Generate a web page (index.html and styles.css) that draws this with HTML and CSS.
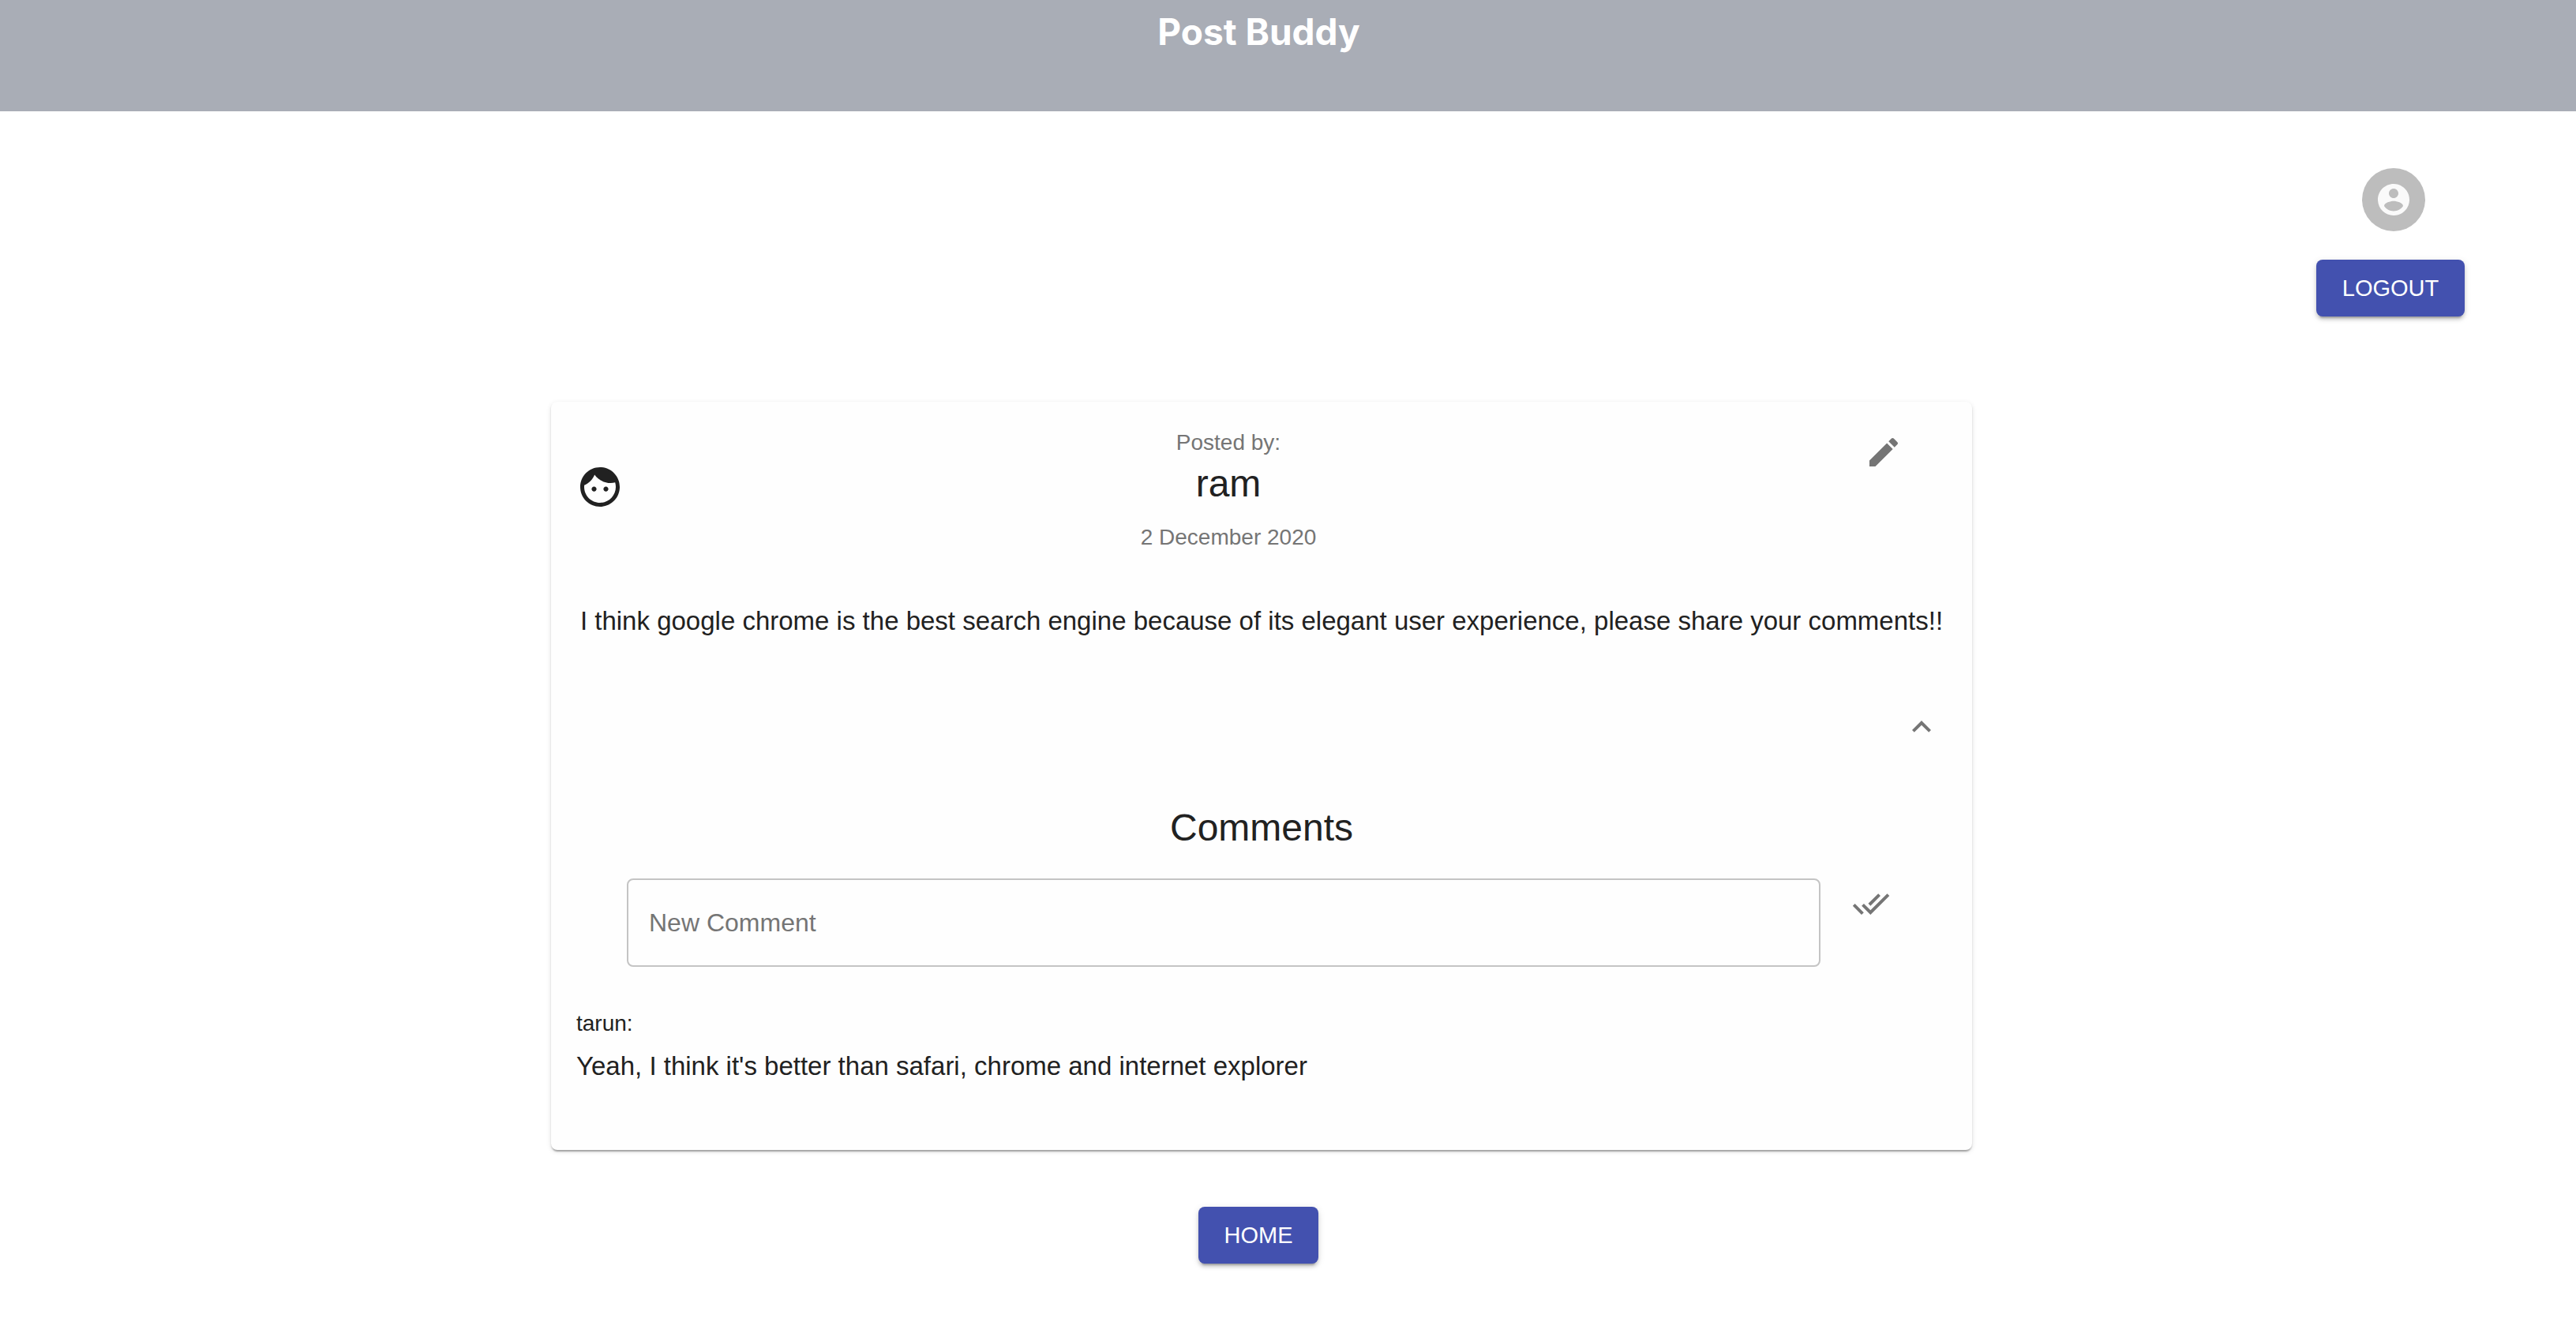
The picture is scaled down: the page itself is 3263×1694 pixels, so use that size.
FILE: index.html
```html
<!DOCTYPE html>
<html lang="en">
<head>
  <meta charset="utf-8">
  <title>Post Buddy</title>
  <link rel="stylesheet" href="styles.css">
</head>
<body>
  <header class="banner">
    <h1 class="banner-title">Post Buddy</h1>
  </header>

  <main class="page">
    <div class="account">
      <span class="avatar">
        <svg class="icon" viewBox="0 0 24 24" aria-hidden="true"><path d="M12 2C6.48 2 2 6.48 2 12s4.48 10 10 10 10-4.48 10-10S17.52 2 12 2zm0 3c1.66 0 3 1.34 3 3s-1.34 3-3 3-3-1.34-3-3 1.34-3 3-3zm0 14.2c-2.5 0-4.71-1.28-6-3.22.03-1.99 4-3.08 6-3.08 1.99 0 5.97 1.09 6 3.08-1.29 1.94-3.5 3.22-6 3.22z"/></svg>
      </span>
      <button class="button button-logout" type="button">LOGOUT</button>
    </div>

    <article class="card">
      <header class="card-header">
        <svg class="face" viewBox="0 0 24 24" aria-hidden="true"><path d="M9 11.75c-.69 0-1.25.56-1.25 1.25s.56 1.25 1.25 1.25 1.25-.56 1.25-1.25-.56-1.25-1.25-1.25zm6 0c-.69 0-1.25.56-1.25 1.25s.56 1.25 1.25 1.25 1.25-.56 1.25-1.25-.56-1.25-1.25-1.25zM12 2C6.48 2 2 6.48 2 12s4.48 10 10 10 10-4.48 10-10S17.52 2 12 2zm0 18c-4.41 0-8-3.59-8-8 0-.29.02-.58.05-.86 2.36-1.05 4.23-2.98 5.21-5.37C11.07 8.33 14.05 10 17.42 10c.78 0 1.53-.09 2.25-.26.21.71.33 1.47.33 2.26 0 4.41-3.59 8-8 8z"/></svg>
        <div class="byline">
          <p class="meta">Posted by:</p>
          <h2 class="heading">ram</h2>
          <p class="meta meta-date">2 December 2020</p>
        </div>
        <button class="icon-button" type="button" aria-label="Edit post">
          <svg class="icon" viewBox="0 0 24 24" aria-hidden="true"><path d="M3 17.25V21h3.75L17.81 9.94l-3.75-3.75L3 17.25zM20.71 7.04c.39-.39.39-1.02 0-1.41l-2.34-2.34c-.39-.39-1.02-.39-1.41 0l-1.83 1.83 3.75 3.75 1.83-1.83z"/></svg>
        </button>
      </header>

      <p class="post-text">I think google chrome is the best search engine because of its elegant user experience, please share your comments!!</p>

      <div class="card-actions">
        <button class="icon-button" type="button" aria-label="Hide comments" aria-expanded="true">
          <svg class="icon" viewBox="0 0 24 24" aria-hidden="true"><path d="M12 8l-6 6 1.41 1.41L12 10.83l4.59 4.58L18 14z"/></svg>
        </button>
      </div>

      <section class="comments">
        <h2 class="heading">Comments</h2>
        <form class="comment-form">
          <input class="comment-input" type="text" placeholder="New Comment" aria-label="New Comment">
          <button class="icon-button" type="button" aria-label="Send comment">
            <svg class="icon" viewBox="0 0 24 24" aria-hidden="true"><path d="M18 7l-1.41-1.41-6.34 6.34 1.41 1.41L18 7zm4.24-1.41L11.66 16.17 7.48 12l-1.41 1.41L11.66 19l12-12-1.42-1.41zM.41 13.41L6 19l1.41-1.41L1.83 12 .41 13.41z"/></svg>
          </button>
        </form>
        <div class="comment">
          <p class="comment-author">tarun:</p>
          <p class="comment-text">Yeah, I think it's better than safari, chrome and internet explorer</p>
        </div>
      </section>
    </article>

    <nav class="footer-nav">
      <button class="button button-home" type="button">HOME</button>
    </nav>
  </main>
</body>
</html>
```
FILE: styles.css
```css
*,
*::before,
*::after {
  box-sizing: border-box;
}

body {
  margin: 0;
  background: #fff;
  color: #212121;
  font: 32px/48px "Liberation Sans", Arial, sans-serif;
}

h1,
h2,
p {
  margin: 0;
  font-weight: 400;
}

svg {
  display: block;
  fill: currentColor;
}

.banner {
  min-height: 141px;
  padding: 8px 74px 0 0;
  background: #a9adb6;
  color: #fff;
  text-align: center;
}

.banner-title {
  font: 700 46px/64px Inter, sans-serif;
}

.page {
  display: flex;
  flex-direction: column;
  align-items: center;
  padding: 72px 67px 72px 0;
}

.account {
  display: flex;
  flex-direction: column;
  align-self: flex-end;
  align-items: center;
  gap: 36px;
  margin-right: 74px;
}

.avatar {
  display: grid;
  place-items: center;
  width: 80px;
  height: 80px;
  margin-left: 8px;
  border-radius: 50%;
  background: #bdbdbd;
  color: #fafafa;
}

.icon {
  width: 48px;
  height: 48px;
}

.button {
  height: 72px;
  padding: 0;
  border: 0;
  border-radius: 8px;
  background: #4351af;
  box-shadow: 0 6px 2px -4px rgba(0, 0, 0, 0.2), 0 4px 4px rgba(0, 0, 0, 0.14), 0 2px 10px rgba(0, 0, 0, 0.12);
  color: #fff;
  font: 29px/48px "Liberation Sans", Arial, sans-serif;
  cursor: pointer;
}

.button-logout {
  width: 188px;
}

.button-home {
  width: 152px;
}

.card {
  width: 100%;
  max-width: 1800px;
  margin-top: 108px;
  border-radius: 8px;
  background: #fefefe;
  box-shadow: 0 4px 2px -2px rgba(0, 0, 0, 0.2), 0 2px 2px rgba(0, 0, 0, 0.14), 0 2px 6px rgba(0, 0, 0, 0.12);
}

.card-header {
  display: flex;
  align-items: flex-start;
  padding: 32px 32px 30px;
}

.face {
  width: 60px;
  height: 60px;
  margin: 46px 32px 0 0;
}

.byline {
  flex: 1;
  text-align: center;
}

.meta {
  color: #757575;
  font-size: 28px;
  line-height: 40px;
}

.meta-date {
  margin-top: 16px;
}

.heading {
  font-size: 48px;
  line-height: 64px;
}

.icon-button {
  flex: none;
  padding: 24px;
  border: 0;
  border-radius: 50%;
  background: none;
  color: #757575;
  cursor: pointer;
}

.card-header .icon-button {
  margin: -16px 32px 0 48px;
}

.post-text,
.comment-text {
  font-size: 33px;
}

.post-text {
  padding: 32px;
  text-align: center;
}

.card-actions {
  display: flex;
  justify-content: flex-end;
  padding: 30px 16px 16px;
}

.comments {
  padding: 32px 32px 82px;
  text-align: center;
}

.comment-form {
  display: flex;
  align-items: flex-start;
  gap: 16px;
  margin-top: 32px;
  padding: 0 48px 0 64px;
}

.comment-form .icon-button {
  margin-top: -16px;
}

.comment-input {
  flex: 1;
  min-width: 0;
  height: 112px;
  padding: 0 26px;
  border: 2px solid #c4c4c4;
  border-radius: 8px;
  background: none;
  color: inherit;
  font: inherit;
}

.comment-input::placeholder {
  color: #757575;
  opacity: 1;
}

.comment {
  display: grid;
  gap: 10px;
  margin-top: 52px;
  text-align: left;
}

.comment-author {
  font-size: 28px;
  line-height: 40px;
}

.footer-nav {
  margin-top: 72px;
  padding-right: 8px;
}
```
